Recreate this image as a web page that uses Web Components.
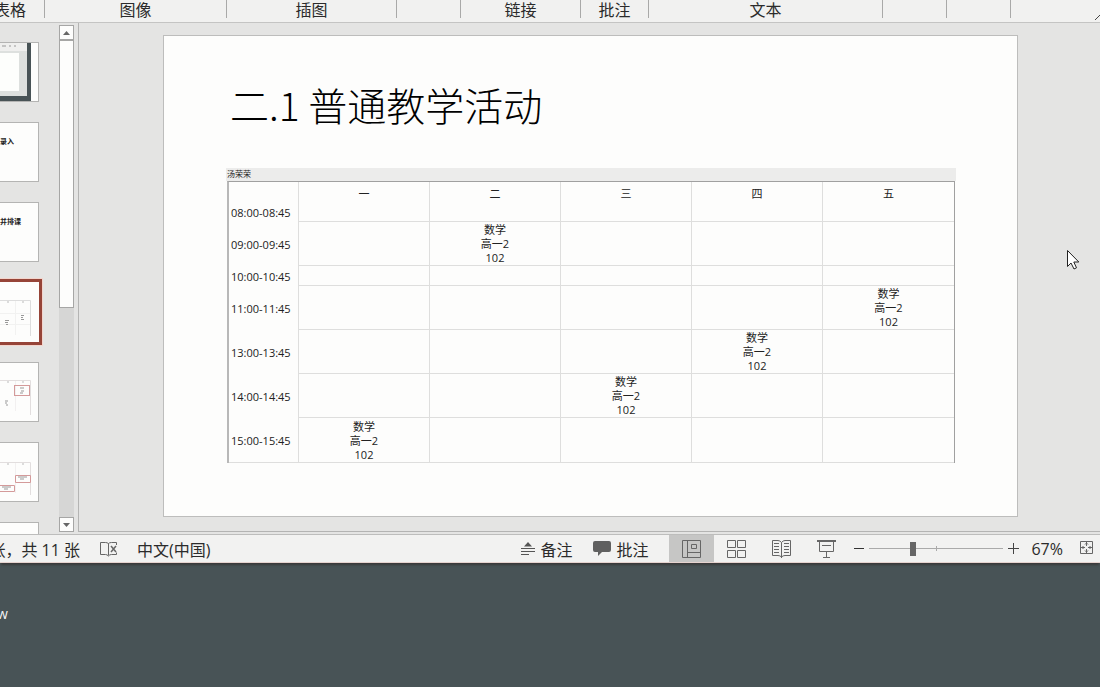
<!DOCTYPE html>
<html lang="zh-CN">
<head>
<meta charset="utf-8">
<title>PowerPoint</title>
<style>
body{margin:0;min-height:100vh;display:flex;flex-direction:column;background:#485356;font-family:"Open Sans","Noto Sans CJK SC",sans-serif;font-size:16px;color:#2b2b2b}
desk-top{flex:1}
</style>
</head>
<body>
<app-ribbon>
  <ribbon-group style="--w:69px" label="表格"></ribbon-group>
  <ribbon-group style="--w:182px" label="图像"></ribbon-group>
  <ribbon-group style="--w:170px" label="插图"></ribbon-group>
  <ribbon-group style="--w:64px"></ribbon-group>
  <ribbon-group style="--w:120px" label="链接"></ribbon-group>
  <ribbon-group style="--w:68px" label="批注"></ribbon-group>
  <ribbon-group style="--w:234px" label="文本"></ribbon-group>
  <ribbon-group style="--w:64px"></ribbon-group>
  <ribbon-group style="--w:64px"></ribbon-group>
</app-ribbon>
<work-space>
  <slide-list slot="nav">
    <slide-thumb>
      <svg width="38" height="58"><rect width="38" height="58" fill="#fdfdfc"/><rect width="31" height="58" fill="#485356"/><rect width="27" height="53" fill="#dde0de"/><rect width="27" height="8" fill="#efefee"/><path d="M2 3h4M9 3h2M14 3h2" stroke="#999"/><rect y="10" width="19" height="38" fill="#fdfefc"/></svg>
    </slide-thumb>
    <slide-thumb>录入</slide-thumb>
    <slide-thumb>并排课</slide-thumb>
    <slide-thumb selected>
      <svg width="38" height="58"><path d="M0 17.500h30.500V53" fill="none" stroke="#ddd"/><path d="M15.500 18v34M0 30.500h30M0 41.500h30" fill="none" stroke="#f2f2f1"/><path d="M7 19h2M22 19h2" stroke="#bbb"/><path d="M5 37.500h4M5 39.500h3M6 41.500h2M21 32.500h3M21 34.500h2M21 36.500h3" stroke="#999"/></svg>
    </slide-thumb>
    <slide-thumb>
      <svg width="38" height="58"><path d="M0 17.500h30.500V52" fill="none" stroke="#e2dede"/><path d="M15.500 18v30" stroke="#f2f0f0"/><path d="M7 19h2M22 19h2" stroke="#bbb"/><rect x="14.500" y="22.500" width="15" height="10" fill="none" stroke="#d49a9a"/><path d="M20 25h4M21 28h3M20 30h3M5 38h3M5 40h2M6 42h2" stroke="#999"/></svg>
    </slide-thumb>
    <slide-thumb>
      <svg width="38" height="58"><path d="M0 19.500h30.500V52" fill="none" stroke="#e2dede"/><path d="M15.500 20v30" stroke="#f2f0f0"/><path d="M7 21h2M22 21h2" stroke="#bbb"/><path d="M0 42.500h14.500v6H0M15.500 32.500h15v7h-15z" fill="none" stroke="#d49a9a"/><path d="M2 44h9M4 46h4M18 34h9M20 36h4" stroke="#999"/></svg>
    </slide-thumb>
    <slide-thumb></slide-thumb>
  </slide-list>
  <slide-page>
    <span slot="title">二.1 普通教学活动</span>
    <time-table></time-table>
  </slide-page>
</work-space>
<status-bar></status-bar>
<desk-top>w</desk-top>
<mouse-pointer></mouse-pointer>

<script>
function define(name, html, init) {
  const template = document.createElement('template');
  template.innerHTML = html;
  customElements.define(name, class extends HTMLElement {
    constructor() {
      super();
      this.attachShadow({ mode: 'open' }).append(template.content.cloneNode(true));
    }
    connectedCallback() { if (init) init(this, this.shadowRoot); }
  });
}

define('app-ribbon', `
<style>
:host{display:flex;overflow:hidden;height:22px;background:#f1f1f0;border-bottom:1px solid #c4c4c3}
.groups{display:flex;flex:1;margin-left:-24px}
button{border:0;padding:11px 0 0;background:none;width:5px;overflow:hidden;display:block}
svg{display:block}
</style>
<div class="groups"><slot></slot></div>
<button aria-label="折叠功能区"><svg width="5" height="6" fill="none" stroke="#444"><path d="M0 6l5-5"/></svg></button>`);

define('ribbon-group', `
<style>
:host{display:flex;flex:0 0 var(--w);box-sizing:border-box;height:18px;border-right:1px solid #a9a9a8;justify-content:center}
span{line-height:20px;white-space:nowrap}
</style><span></span>`, (host, root) => {
  root.querySelector('span').textContent = host.getAttribute('label') || '';
});

define('work-space', `
<style>
:host{display:flex;height:511px;background:#e4e4e3}
main{flex:1;box-sizing:border-box;margin-bottom:2px;border-left:1px solid #b4b4b3;border-bottom:1px solid #b4b4b3;padding:12px 82px 0 84px}
</style>
<slot name="nav"></slot><main><slot></slot></main>`);

define('slide-list', `
<style>
:host{display:flex;width:78px}
.thumbs{width:59px;overflow:hidden;padding-top:19px;box-sizing:border-box;display:flex;flex-direction:column;gap:20px}
.bar{width:15px;margin:2px 0;display:flex;flex-direction:column;background:#d6d6d5}
button,.grip{box-sizing:border-box;background:#fdfdfc;border:1px solid #a6a6a5}
button{height:15px;padding:0;display:flex;align-items:center;justify-content:center}
.grip{height:268px}
.down{margin-top:auto}
</style>
<div class="thumbs"><slot></slot></div>
<div class="bar">
<button aria-label="向上滚动"><svg width="7" height="4"><path d="M0 4h7L3.500 0z" fill="#666"/></svg></button>
<div class="grip"></div>
<button class="down" aria-label="向下滚动"><svg width="7" height="4"><path d="M0 0h7L3.500 4z" fill="#666"/></svg></button>
</div>`);

define('slide-thumb', `
<style>
:host{display:block;flex:none;box-sizing:border-box;width:39px;height:60px;background:#fdfdfc;border:1px solid #b4b4b3;border-left:0;overflow:hidden;font:bold 7px/36px "Noto Sans CJK SC",sans-serif;color:#222;white-space:nowrap}
:host([selected]){border-color:#fdfdfc;outline:3px solid #964438;box-shadow:0 0 0 4px #f3d5cd}
::slotted(svg){display:block}
</style><slot></slot>`);

define('slide-page', `
<style>
:host{display:block;background:#fdfdfc;border:1px solid #bdbdbc;padding:44px 61px 53px 62px}
h1{margin:0 0 40px 4px;font:300 39px/48px "Noto Sans CJK SC",sans-serif;color:#000;white-space:nowrap}
</style>
<h1><slot name="title"></slot></h1><slot></slot>`);

define('time-table', `
<style>
:host{display:block;font-size:11px;line-height:14px;color:#222}
figure{margin:0}
figcaption{height:13px;padding-left:1px;background:#ececeb;font-size:8px;line-height:12px}
.frame{margin:0 1px}
table{width:100%;table-layout:fixed;border-collapse:separate;border-spacing:0;border:solid #a0a0a0;border-width:1px 1px 0 2px;border-left-color:#b8b8b8}
th,td{padding:1px 0 0;font-weight:400;text-align:center;border-right:1px solid #dededd;box-sizing:border-box}
th:last-child,td:last-child{border-right:0}
td{border-bottom:1px solid #dededd}
tr>:first-child{width:70px;text-align:left;padding-left:2px;white-space:nowrap}
tbody tr:last-child>th{border-bottom:1px solid #dededd}
thead th{height:20px;padding-top:3px}
tr{height:44px}
thead tr,tr.short{height:20px}
tbody tr:last-child{height:45px}
</style>
<figure><figcaption>汤荣荣</figcaption><div class="frame"><table>
<thead><tr><th></th><th scope="col">一</th><th scope="col">二</th><th scope="col">三</th><th scope="col">四</th><th scope="col">五</th></tr></thead>
<tbody></tbody></table></div></figure>`, (host, root) => {
  const periods = [['08:00-08:45', 0], ['09:00-09:45', 2], ['10:00-10:45', 0], ['11:00-11:45', 5], ['13:00-13:45', 4], ['14:00-14:45', 3], ['15:00-15:45', 1]];
  root.querySelector('tbody').innerHTML = periods.map(([time, day]) =>
    `<tr class="${day ? '' : 'short'}"><th scope="row">${time}</th>` +
    [1, 2, 3, 4, 5].map(d => `<td>${d === day ? '数学<br>高一2<br>102' : ''}</td>`).join('') + '</tr>').join('');
});

define('status-bar', `
<style>
:host{display:flex;align-items:center;height:27px;background:#f2f2f1;border-top:1px solid #bdbdbc;border-bottom:1px solid #e6d3cf;box-shadow:0 3px 2px -1px #3a3a3a;position:relative;white-space:nowrap}
svg{display:block;fill:none;stroke:#666}
button{font:inherit;color:inherit;border:0;background:none;padding:0;display:flex;align-items:center;justify-content:center;height:27px}
.pages{width:80px;display:flex;justify-content:flex-end;overflow:hidden}
.spell{margin:0 20px}
.right{display:flex;align-items:center;margin-left:auto}
.label{gap:5px;margin-right:21px}
.view{width:45px}
.view[aria-pressed=true]{background:#c6c6c5}
.step{width:20px}
input{appearance:none;width:134px;height:14px;margin:0;background:linear-gradient(#aaa,#aaa) center/1px 5px no-repeat,linear-gradient(#aaa,#aaa) center/100% 1px no-repeat}
input::-webkit-slider-thumb{appearance:none;width:6px;height:14px;background:#666}
.percent{margin:0 17px 0 8px}
.fit{margin-right:7px}
</style>
<span class="pages">张，共 11 张</span>
<button class="spell" aria-label="拼写检查"><svg width="17" height="16"><path d="M8.500 14.500V2.500Q7 1.500 5.500 1.500h-5v12h5q1.500 0 3 1.500 1-1.500 3-1.500h5v-2M8.500 2.500q1-1 3-1h5V4"/><path d="M11 5l5 6M16 5l-5 6" stroke-width="1.500"/></svg></button>
<button>中文(中国)</button>
<div class="right">
<button class="label"><svg width="14" height="14"><path d="M3 4.500h8L7 0z" fill="#555" stroke="none"/><path d="M0 6.500h14M0 9.500h14M0 12.500h8" stroke="#555"/></svg>备注</button>
<button class="label"><svg width="18" height="16"><path d="M2 0h14q2 0 2 2v7q0 2-2 2H9l-4 4v-4H2q-2 0-2-2V2q0-2 2-2z" fill="#606060" stroke="none"/></svg>批注</button>
<button class="view" aria-pressed="true" aria-label="普通视图"><svg width="19" height="18"><path d="M.5.5h18v17H.5zM5.500.5v17M5.500 12.500h13M9.500 4.500h5v4h-5z"/></svg></button>
<button class="view" aria-label="幻灯片浏览"><svg width="19" height="18"><path d="M.5.5h8v7h-8zM10.500.5h8v7h-8zM.5 10.500h8v7h-8zM10.500 10.500h8v7h-8z"/></svg></button>
<button class="view" aria-label="阅读视图"><svg width="19" height="18"><path d="M9.500 18V2.500Q8 .5 6 .5H.5v15H6q2 0 3.500 1.500 1.500-1.500 3.500-1.500h5.500V.5H13q-2 0-3.500 2M2 3.500h5M2 6.500h5M2 9.500h5M2 12.500h5M12 3.500h5M12 6.500h5M12 9.500h5M12 12.500h5"/></svg></button>
<button class="view" aria-label="幻灯片放映"><svg width="19" height="18"><path d="M0 1h19" stroke-width="2"/><path d="M2.500 2v9.500h14V2M5 5.500h9M9.500 12v5M6 17.500h7"/></svg></button>
<button class="step" aria-label="缩小"><svg width="10" height="11"><path d="M0 5.500h10" stroke="#333"/></svg></button>
<input type="range" aria-label="缩放" min="0" max="100" value="32">
<button class="step" aria-label="放大"><svg width="11" height="11"><path d="M0 5.500h11M5.500 0v11" stroke="#444"/></svg></button>
<span class="percent">67%</span>
<button class="fit" aria-label="适应窗口"><svg width="13" height="15"><path d="M.5.5h12v12H.5zM6.500 1v4M6.500 8v4M1 6.500h4M8 6.500h4M5 3.500L6.500 2 8 3.500M5 9.500L6.500 11 8 9.500M3.500 5L2 6.500 3.500 8M9.500 5L11 6.500 9.500 8"/></svg></button>
</div>`);

define('desk-top', `
<style>
:host{display:block;padding-top:41px;overflow:hidden;color:#f4f4f4;font-size:14px;line-height:20px}
span{display:block;margin-left:-3px}
</style><span><slot></slot></span>`);

define('mouse-pointer', `
<style>
:host{position:absolute;left:1067px;top:250px;pointer-events:none}
svg{display:block}
</style>
<svg width="13" height="20"><path d="M.5.5v16l3.500-3.500 3 6 2.500-1.200L6.800 12h5z" fill="#fff" stroke="#222"/></svg>`);
</script>
</body>
</html>
